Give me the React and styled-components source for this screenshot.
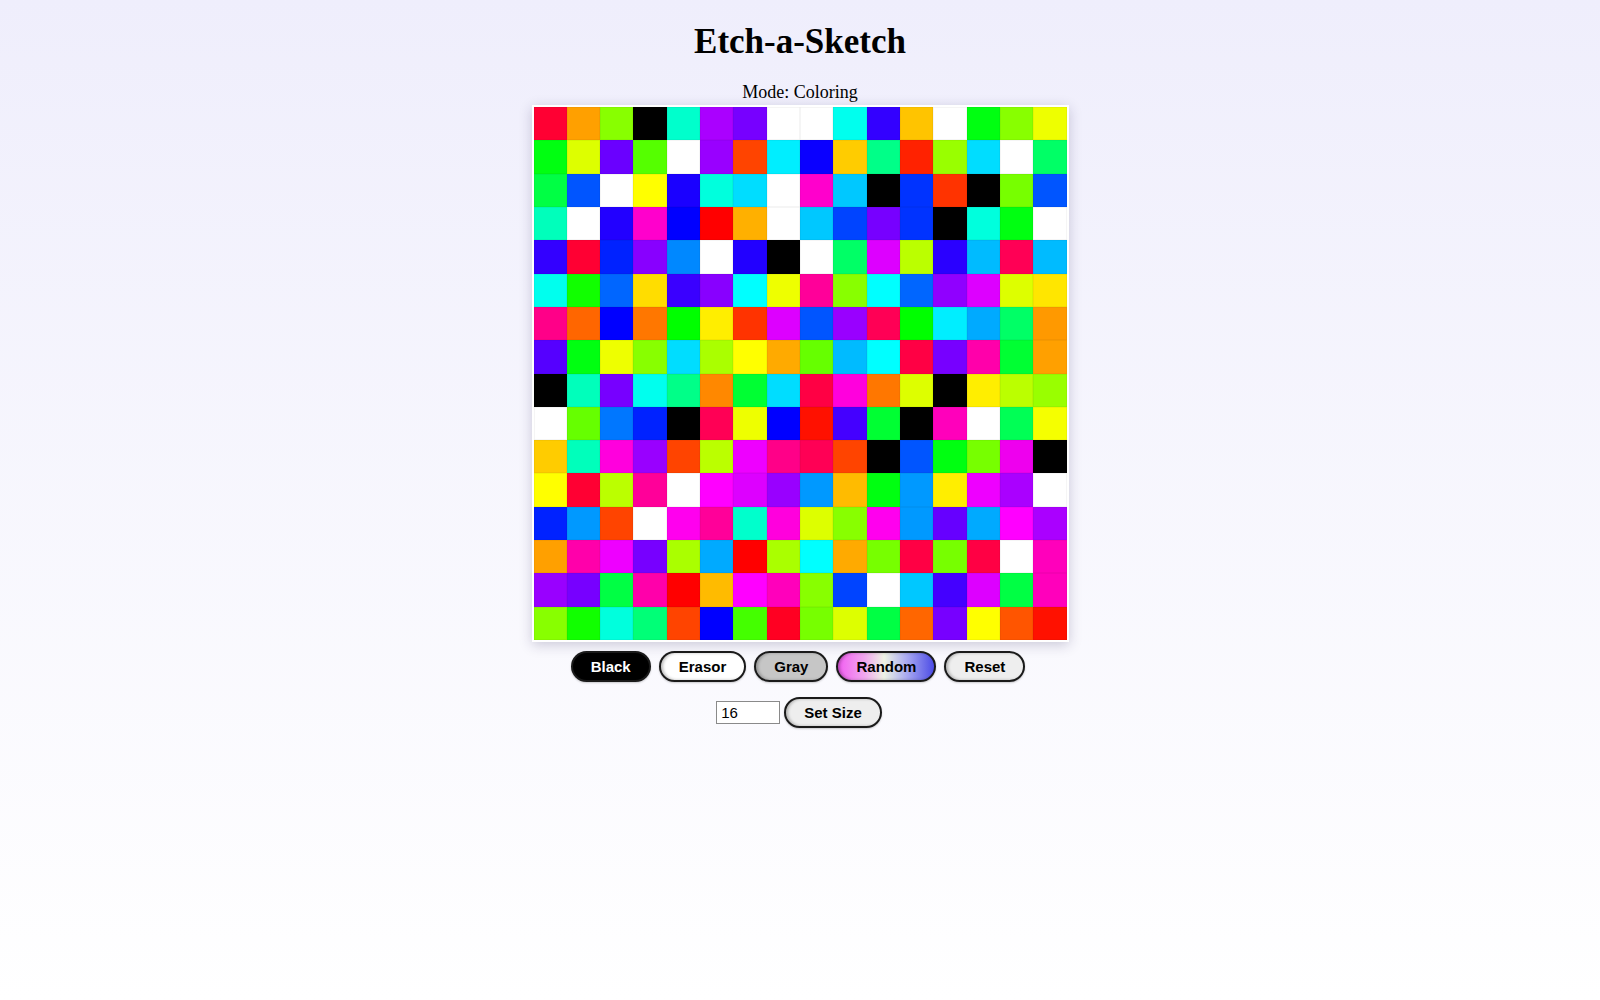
import React from "react";
import styled, { createGlobalStyle, css } from "styled-components";

const GlobalStyle = createGlobalStyle`
  html, body {
    margin: 0;
    padding: 0;
  }
  body {
    font-family: "Liberation Serif", "Times New Roman", serif;
    color: #000;
  }
`;

const COLORS = [
  "#ff0033 #ffa000 #88ff00 #000000 #00ffcc #aa00ff #7700ff #ffffff #ffffff #00ffee #3300ff #ffc400 #ffffff #00ff11 #88ff00 #eeff00",
  "#00ff11 #ddff00 #6a00ff #55ff00 #ffffff #9900ff #ff4400 #00eeff #0a00ff #ffcc00 #00ff88 #ff2200 #99ff00 #00ddff #ffffff #00ff66",
  "#00ff44 #0055ff #ffffff #ffff00 #1a00ff #00ffdd #00ddff #ffffff #ff00cc #00c8ff #000000 #0033ff #ff3300 #000000 #77ff00 #0055ff",
  "#00ffbb #ffffff #2200ff #ff00cc #0000ff #ff0000 #ffb000 #ffffff #00c8ff #0044ff #7700ff #0033ff #000000 #00ffdd #00ff11 #ffffff",
  "#3300ff #ff0033 #0022ff #8800ff #0088ff #ffffff #2200ff #000000 #ffffff #00ff66 #dd00ff #bbff00 #2a00ff #00bbff #ff0055 #00bbff",
  "#00ffee #11ff00 #0066ff #ffdd00 #3a00ff #8800ff #00ffff #eeff00 #ff0099 #88ff00 #00ffff #0066ff #9000ff #dd00ff #ddff00 #ffe600",
  "#ff0088 #ff6600 #0000ff #ff7700 #00ff00 #ffee00 #ff3300 #dd00ff #0055ff #9900ff #ff0055 #00ff00 #00eeff #00aaff #00ff66 #ff9900",
  "#5500ff #00ff11 #eeff00 #88ff00 #00ddff #aaff00 #ffff00 #ffaa00 #66ff00 #00bbff #00ffff #ff0044 #7700ff #ff00aa #00ff33 #ffa000",
  "#000000 #00ffbb #7700ff #00ffee #00ff88 #ff8800 #00ff33 #00ddff #ff0044 #ff00dd #ff7700 #ddff00 #000000 #ffee00 #bbff00 #99ff00",
  "#ffffff #66ff00 #0077ff #0022ff #000000 #ff0055 #eeff00 #0000ff #ff1100 #4400ff #00ff33 #000000 #ff00bb #ffffff #00ff55 #f5ff00",
  "#ffcc00 #00ffbb #ff00dd #9900ff #ff4400 #bbff00 #ee00ff #ff0088 #ff0055 #ff4400 #000000 #0055ff #00ff11 #77ff00 #ee00ee #000000",
  "#ffff00 #ff0033 #bbff00 #ff0099 #ffffff #ff00ff #dd00ff #9900ff #0099ff #ffbb00 #00ff11 #0099ff #ffee00 #ee00ff #aa00ff #ffffff",
  "#0022ff #0099ff #ff4400 #ffffff #ff00ee #ff0099 #00ffcc #ff00dd #ddff00 #88ff00 #ff00ee #0099ff #6600ff #00aaff #ff00ff #aa00ff",
  "#ffa000 #ff00aa #ee00ff #7700ff #aaff00 #00aaff #ff0000 #aaff00 #00ffff #ffaa00 #77ff00 #ff0044 #77ff00 #ff0044 #ffffff #ff00bb",
  "#9900ff #7700ff #00ff44 #ff00aa #ff0000 #ffbb00 #ff00ff #ff00bb #88ff00 #0044ff #ffffff #00c8ff #4400ff #dd00ff #00ff44 #ff00bb",
  "#88ff00 #11ff00 #00ffdd #00ff77 #ff4400 #0000ff #44ff00 #ff0022 #77ff00 #ddff00 #00ff44 #ff6600 #7700ff #ffff00 #ff5500 #ff1100",
].flatMap((row) => row.split(" "));

const Page = styled.div`
  min-height: 100vh;
  background: linear-gradient(to bottom, #efeefc 0%, #ffffff 100%);
  display: flex;
  flex-direction: column;
  align-items: center;
`;

const Title = styled.h1`
  margin: 22px 0 0;
  font-size: 35px;
  font-weight: bold;
`;

const Mode = styled.p`
  margin: 20px 0 2px;
  font-size: 18px;
`;

const Grid = styled.div`
  width: 533px;
  height: 533px;
  display: grid;
  grid-template-columns: repeat(16, 1fr);
  grid-template-rows: repeat(16, 1fr);
  border: 2px solid #ffffff;
  box-shadow: 0 3px 12px rgba(40, 30, 80, 0.22);
`;

const Cell = styled.div`
  box-shadow: inset 0 0 0 0.5px rgba(0, 0, 0, 0.08);
`;

const Controls = styled.div`
  display: flex;
  gap: 8px;
  margin-top: 9px;
  margin-right: 4px;
`;

const SizeRow = styled.div`
  display: flex;
  align-items: center;
  gap: 4px;
  margin-top: 15px;
  margin-right: 2px;
`;

const variants = {
  black: css`
    background: #000;
    color: #fff;
  `,
  white: css`
    background: #fff;
    color: #000;
  `,
  gray: css`
    background: #c6c6c6;
    color: #000;
  `,
  random: css`
    background: linear-gradient(to right, #f25ef2 0%, #f0a8ee 28%, #eef3e4 48%, #a8a8f0 72%, #4c4ce6 100%);
    color: #000;
  `,
  light: css`
    background: #eeeeee;
    color: #000;
  `,
};

const Button = styled.button`
  font-family: "Liberation Sans", Arial, sans-serif;
  font-size: 15px;
  font-weight: bold;
  padding: 5px 18px;
  border: 2px solid #1a1a1a;
  border-radius: 999px;
  cursor: pointer;
  box-shadow: inset 2px 0 3px rgba(0, 0, 0, 0.25), 0 1px 2px rgba(0, 0, 0, 0.2);
  ${({ $variant }) => variants[$variant]}
`;

const SizeInput = styled.input`
  box-sizing: border-box;
  width: 64px;
  height: 23px;
  padding: 1px 4px;
  font-family: "Liberation Sans", Arial, sans-serif;
  font-size: 15px;
  border: 1px solid #8a8a8a;
  background: #fff;
`;

const App = () => {
  return (
    <Page>
      <GlobalStyle />
      <Title>Etch-a-Sketch</Title>
      <Mode>Mode: Coloring</Mode>
      <Grid>
        {COLORS.map((color, i) => (
          <Cell key={i} style={{ background: color }} />
        ))}
      </Grid>
      <Controls>
        <Button $variant="black">Black</Button>
        <Button $variant="white">Erasor</Button>
        <Button $variant="gray">Gray</Button>
        <Button $variant="random">Random</Button>
        <Button $variant="light">Reset</Button>
      </Controls>
      <SizeRow>
        <SizeInput type="number" defaultValue={16} />
        <Button $variant="light">Set Size</Button>
      </SizeRow>
    </Page>
  );
};

export default App;
